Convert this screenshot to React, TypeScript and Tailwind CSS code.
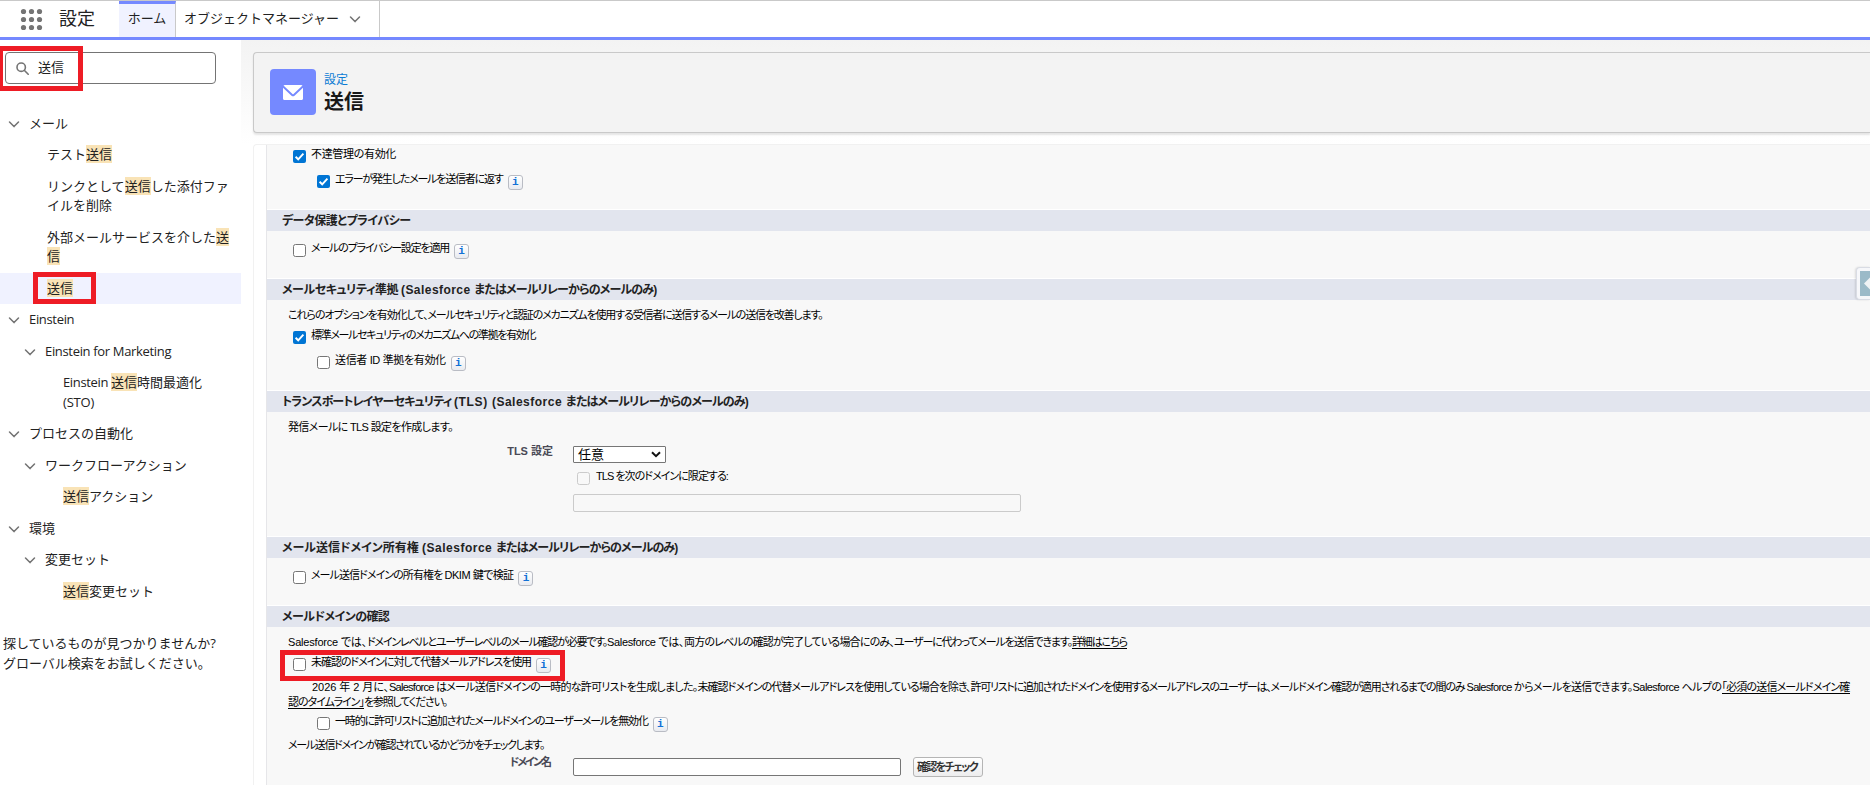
import React, { ReactNode } from 'react';
import clsx from 'clsx';

const Chevron = ({ className }: { className?: string }) => (
  <svg className={clsx('shrink-0', className)} width="12" height="12" viewBox="0 0 12 12" fill="none" stroke="#747474" strokeWidth="1.5" strokeLinecap="round" strokeLinejoin="round">
    <path d="M1.5 4 6 8.6 10.5 4" />
  </svg>
);

const Mark = ({ children }: { children: ReactNode }) => (
  <mark className="bg-[#f9e3b6] text-inherit">{children}</mark>
);

function Group({ label, nested }: { label: string; nested?: boolean }) {
  return (
    <div className={clsx('flex items-center py-[6px]', nested ? 'pl-[24px]' : 'pl-[8px]')}>
      <Chevron className="mt-px" />
      <span className="ml-[9px]">{label}</span>
    </div>
  );
}

function Leaf({ children, deep, active }: { children: ReactNode; deep?: boolean; active?: boolean }) {
  return (
    <div className={clsx('relative py-[6px] pr-[8px]', deep ? 'pl-[63px]' : 'pl-[47px]', active && 'bg-[#f0f2ff]')}>
      {children}
      {active && <div className="absolute -top-[1px] left-[33px] h-[32px] w-[63px] border-5 border-[#ee1c25]" />}
    </div>
  );
}

function Info() {
  return (
    <span className="ml-[5px] flex h-[15px] w-[15px] shrink-0 items-center justify-center rounded-[3px] border border-[#b9bcc4] bg-linear-to-b from-white to-[#e9ebf0] font-['Liberation_Mono',monospace] text-[11px] leading-none font-bold text-[#1271d6]">
      i
    </span>
  );
}

function Check({ checked, disabled }: { checked?: boolean; disabled?: boolean }) {
  if (checked) {
    return (
      <span className="flex h-[13px] w-[13px] shrink-0 items-center justify-center rounded-[2px] bg-[#0075d4]">
        <svg width="11" height="11" viewBox="0 0 11 11" fill="none" stroke="#fff" strokeWidth="1.9">
          <path d="M1.6 5.8 4.2 8.3 9.4 2.6" />
        </svg>
      </span>
    );
  }
  return (
    <span
      className={clsx(
        'h-[13px] w-[13px] shrink-0 rounded-[2.5px] border',
        disabled ? 'border-[#cbcbcb] bg-[#f8f8f8]' : 'border-[#767676] bg-white'
      )}
    />
  );
}

// one run of text with its own tracking
function T({ children, className }: { children: ReactNode; className?: string }) {
  return <span className={clsx('whitespace-pre', className)}>{children}</span>;
}

type OptionProps = {
  children: ReactNode;
  checked?: boolean;
  nested?: boolean;
  info?: boolean;
  className?: string;
};

function Option({ children, checked, nested, info, className }: OptionProps) {
  return (
    <div className={clsx('flex h-[15px] items-start', nested ? 'pl-[50px]' : 'pl-[26px]', className)}>
      <Check checked={checked} />
      <span className="-mt-[3px] ml-[5px] leading-[14px]">{children}</span>
      {info && <Info />}
    </div>
  );
}

function Bar({ children }: { children: ReactNode }) {
  return (
    <h3 className="h-[22px] border-t border-white bg-[#e2e5ee] pl-[15px] text-[12px] leading-[22px] font-bold text-[#222]">
      {children}
    </h3>
  );
}

export default function App() {
  return (
    <div className="relative flex h-[785px] w-[1870px] flex-col overflow-hidden bg-white font-['Open_Sans','Noto_Sans_CJK_JP',sans-serif] text-[13px] leading-[19.5px] text-[#222]">
      <header className="flex h-[40px] shrink-0 border-t border-b-3 border-t-[#c9c9c9] border-b-[#7589ff]">
        <div className="flex w-[119px] items-center pl-[20px]">
          <svg width="23" height="23" viewBox="0 0 23 23" fill="#747474">
            {[3, 11, 19].map((y) => [3, 11, 19].map((x) => <circle key={`${x}-${y}`} cx={x + 0.5} cy={y + 0.5} r="2.6" />))}
          </svg>
          <span className="ml-[16px] text-[18px] text-[#222]">設定</span>
        </div>
        <div className="flex w-[57px] items-center justify-center border-t-3 border-r border-t-[#7589ff] border-r-[#c9c9c9] bg-[#f0f2ff] pb-[3px]">
          <span>ホーム</span>
        </div>
        <div className="flex w-[204px] items-center border-r border-[#c9c9c9] pl-[8px]">
          <span>オブジェクトマネージャー</span>
          <Chevron className="ml-[10px]" />
        </div>
      </header>

      <div className="flex min-h-0 flex-1">
        <aside className="relative w-[241px] shrink-0">
          <div className="mt-[12px] ml-[5px] flex h-[32px] w-[211px] items-center rounded-[4px] border border-[#747474] bg-white pl-[10px]">
            <svg width="13" height="13" viewBox="0 0 13 13" fill="none" stroke="#747474" strokeWidth="1.6" strokeLinecap="round">
              <circle cx="5.2" cy="5.2" r="4.2" />
              <path d="m8.5 8.5 3.7 3.7" />
            </svg>
            <span className="ml-[9px]">送信</span>
          </div>
          <div className="absolute top-[6px] -left-[2px] h-[45px] w-[85px] border-5 border-[#ee1c25]" />

          <nav className="mt-[23.5px]">
            <Group label="メール" />
            <Leaf>テスト<Mark>送信</Mark></Leaf>
            <Leaf>リンクとして<Mark>送信</Mark>した添付ファイルを削除</Leaf>
            <Leaf>外部メールサービスを介した<Mark>送信</Mark></Leaf>
            <Leaf active><Mark>送信</Mark></Leaf>
            <div className="tracking-[-0.33px]">
              <Group label="Einstein" />
              <Group label="Einstein for Marketing" nested />
            </div>
            <Leaf deep><span className="tracking-[-0.35px]">Einstein </span><Mark>送信</Mark>時間最適化<br /><span className="tracking-[-0.2px]">(STO)</span></Leaf>
            <Group label="プロセスの自動化" />
            <Group label="ワークフローアクション" nested />
            <Leaf deep><Mark>送信</Mark>アクション</Leaf>
            <Group label="環境" />
            <Group label="変更セット" nested />
            <Leaf deep><Mark>送信</Mark>変更セット</Leaf>
          </nav>
          <p className="mt-[26px] pl-[3px] leading-[20px]">
            探しているものが見つかりませんか?
            <br />
            グローバル検索をお試しください。
          </p>
        </aside>

        <main className="flex min-w-0 flex-1 flex-col bg-linear-to-b from-[#f3f3f3] to-white to-[104px] pl-[12px]">
          <div className="mt-[12px] flex h-[81px] shrink-0 rounded-l-[4px] border border-r-0 border-[#c9c9c9] bg-[#f3f3f3] pt-[16px] pl-[16px] shadow-[0_2px_2px_rgba(0,0,0,0.1)]">
            <div className="flex h-[46px] w-[46px] items-center justify-center rounded-[4px] bg-[#7589ff]">
              <svg width="20" height="15" viewBox="0 0 20 15" fill="#fff">
                <path d="M.5.6C.8.2 1.200 0 1.800 0h16.400c.6 0 1 .2 1.300.6L10.500 9c-.3.300-.7.300-1 0z" />
                <path d="M0 2.800 8.500 10.700c.9.8 2.100.8 3 0L20 2.800V13.500c0 .9-.6 1.500-1.500 1.500h-17C.6 15 0 14.400 0 13.500z" />
              </svg>
            </div>
            <div className="ml-[8px] pt-[3px]">
              <p className="text-[12px] leading-[16px] text-[#0b7bd4]">設定</p>
              <h1 className="text-[20px] leading-[28px] font-bold text-[#181818]">送信</h1>
            </div>
          </div>

          <div className="mt-[11px] min-h-0 flex-1 overflow-hidden rounded-tl-[4px] border-t border-l border-[#f1f1f1] bg-white pl-[12px]">
            <div className="h-full border-l border-[#e6e6e9] bg-[#f8f8f8] font-['Liberation_Sans','Noto_Sans_CJK_JP',sans-serif] text-[11px] leading-[14px] text-black [font-feature-settings:'palt']">
              <section className="h-[64px] pt-[5px]">
                <Option checked><T className="tracking-[-0.32px]">不達管理の有効化</T></Option>
                <Option checked nested info className="mt-[10px]"><T className="tracking-[-1.18px]">エラーが発生したメールを送信者に返す</T></Option>
              </section>

              <Bar><T className="tracking-[-0.56px]">データ保護とプライバシー</T></Bar>
              <section className="h-[47px] pt-[13px]">
                <Option info><T className="tracking-[-1.2px]">メールのプライバシー設定を適用</T></Option>
              </section>

              <Bar>
                <T className="tracking-[-0.46px]">メールセキュリティ準拠 </T>
                <T className="tracking-[0.45px]">(Salesforce </T>
                <T className="tracking-[-0.84px]">またはメールリレーからのメールのみ)</T>
              </Bar>
              <section className="h-[90px] pt-[8px]">
                <p className="h-[14px] pl-[21px]">
                  <T className="tracking-[-1.046px]">これらのオプションを有効化して、</T>
                  <T className="tracking-[-1.183px]">メールセキュリティと認証のメカニズムを使用する受信者に送信するメールの送信を改善します。</T>
                </p>
                <Option checked className="mt-[9px]"><T className="tracking-[-1.34px]">標準メールセキュリティのメカニズムへの準拠を有効化</T></Option>
                <Option nested info className="mt-[10px]"><T className="tracking-[-0.35px]">送信者 ID 準拠を有効化</T></Option>
              </section>

              <Bar>
                <T className="tracking-[-0.86px]">トランスポートレイヤーセキュリティ </T>
                <T className="tracking-[0.66px]">(TLS) </T>
                <T className="tracking-[0.5px]">(Salesforce </T>
                <T className="tracking-[-0.84px]">またはメールリレーからのメールのみ)</T>
              </Bar>
              <section className="h-[124px] pt-[8px]">
                <p className="h-[14px] pl-[21px]"><T className="tracking-[-0.63px]">発信メールに TLS 設定を作成します。</T></p>
                <div className="mt-[12px] flex">
                  <div className="-mt-[2px] w-[286px] text-right font-bold text-[#4a4a56]"><T>TLS 設定</T></div>
                  <div className="ml-[20px]">
                    <div className="flex h-[17px] w-[93px] items-center justify-between rounded-[1px] border border-[#767676] bg-white pr-[4px] pl-[4px] text-[13px]">
                      <span>任意</span>
                      <svg width="10" height="7" viewBox="0 0 10 7" fill="none" stroke="#111" strokeWidth="2">
                        <path d="M1 1.200 5 5.200 9 1.200" />
                      </svg>
                    </div>
                    <div className="mt-[9px] flex h-[13px] items-start pl-[4px]">
                      <Check disabled />
                      <span className="-mt-[3px] ml-[6px]"><T className="tracking-[-0.96px]">TLS を次のドメインに限定する:</T></span>
                    </div>
                    <div className="mt-[9px] h-[18px] w-[448px] rounded-[2px] border border-[#cbcbcb]" />
                  </div>
                </div>
              </section>

              <Bar>
                <T className="tracking-[-0.02px]">メール送信ドメイン所有権 </T>
                <T className="tracking-[0.5px]">(Salesforce </T>
                <T className="tracking-[-0.88px]">またはメールリレーからのメールのみ)</T>
              </Bar>
              <section className="h-[47px] pt-[13px]">
                <Option info>
                  <T className="tracking-[-0.93px]">メール送信ドメインの所有権を </T>
                  <T className="tracking-[-0.45px]">DKIM </T>
                  <T className="tracking-[-0.6px]">鍵で検証</T>
                </Option>
              </section>

              <Bar><T className="tracking-[-0.55px]">メールドメインの確認</T></Bar>
              <section className="pt-[8px]">
                <p className="h-[14px] pl-[21px] whitespace-nowrap">
                  <T className="tracking-[-0.193px]">Salesforce では、</T>
                  <T className="tracking-[-1.231px]">ドメインレベルとユーザーレベルのメール確認が必要です。</T>
                  <T className="tracking-[-0.336px]">Salesforce では、</T>
                  <T className="tracking-[-0.816px]">両方のレベルの確認が完了している場合にのみ、</T>
                  <T className="tracking-[-1.15px]">ユーザーに代わってメールを送信できます。</T>
                  <T className="border-b border-black tracking-[-1.12px]">詳細はこちら</T>
                </p>
                <div className="relative mt-[9px]">
                  <Option info><T className="tracking-[-1.06px]">未確認のドメインに対して代替メールアドレスを使用</T></Option>
                  <div className="absolute -top-[8px] left-[13px] h-[31px] w-[285px] border-5 border-[#ee1c25]" />
                </div>
                <p className="mt-[7px] h-[14px] pl-[45px] whitespace-nowrap">
                  <T className="tracking-[-0.044px]">2026 年 2 月に、</T>
                  <T className="tracking-[-0.736px]">Salesforce はメール送信ドメインの一時的な許可リストを生成しました。</T>
                  <T className="tracking-[-0.955px]">未確認ドメインの代替メールアドレスを使用している場合を除き、</T>
                  <T className="tracking-[-1.24px]">許可リストに追加されたドメインを使用するメールアドレスのユーザーは、</T>
                  <T className="tracking-[-1.104px]">メールドメイン確認が適用されるまでの間のみ </T>
                  <T className="tracking-[-0.683px]">Salesforce からメールを送信できます。</T>
                  <T className="tracking-[-0.547px]">Salesforce ヘルプの</T>
                  <T className="border-b border-black tracking-[-0.83px]">「必須の送信メールドメイン確</T>
                </p>
                <p className="mt-px h-[14px] pl-[21px]">
                  <T className="border-b border-black tracking-[-0.99px]">認のタイムライン」</T>
                  <T className="tracking-[-1.23px]">を参照してください。</T>
                </p>
                <Option nested info className="mt-[8px]"><T className="tracking-[-1.16px]">一時的に許可リストに追加されたメールドメインのユーザーメールを無効化</T></Option>
                <p className="mt-[6px] h-[14px] pl-[21px]"><T className="tracking-[-1.34px]">メール送信ドメインが確認されているかどうかをチェックします。</T></p>
                <div className="mt-[6px] flex">
                  <div className="-mt-[3px] w-[286px] pr-[3px] text-right font-bold text-[#4a4a56]"><T className="tracking-[-2px]">ドメイン名</T></div>
                  <div className="ml-[20px] h-[18px] w-[328px] rounded-[2px] border border-[#767676] bg-white" />
                  <button className="-mt-px ml-[12px] h-[20px] w-[70px] rounded-[3px] border border-[#b5b5b5] bg-linear-to-b from-white to-[#ededee] pr-[2px] text-center font-bold text-[#333]"><T className="tracking-[-1.67px]">確認をチェック</T></button>
                </div>
              </section>
            </div>
          </div>
        </main>
      </div>

      {/* collapsed help panel handle */}
      <div className="absolute top-[267px] right-0 flex h-[33px] w-[14px] items-center rounded-l-[4px] border border-r-0 border-[#d9dce4] bg-[#f6f7fa] pl-[3px] shadow-[-1px_0_2px_rgba(0,0,0,0.12)]">
        <svg width="10" height="25" viewBox="0 0 10 25">
          <path d="M0 0h10v25H0z" fill="#9bbac8" />
          <path d="M10 6.500v12L4 12.500z" fill="#f0f3f5" />
        </svg>
      </div>
    </div>
  );
}
